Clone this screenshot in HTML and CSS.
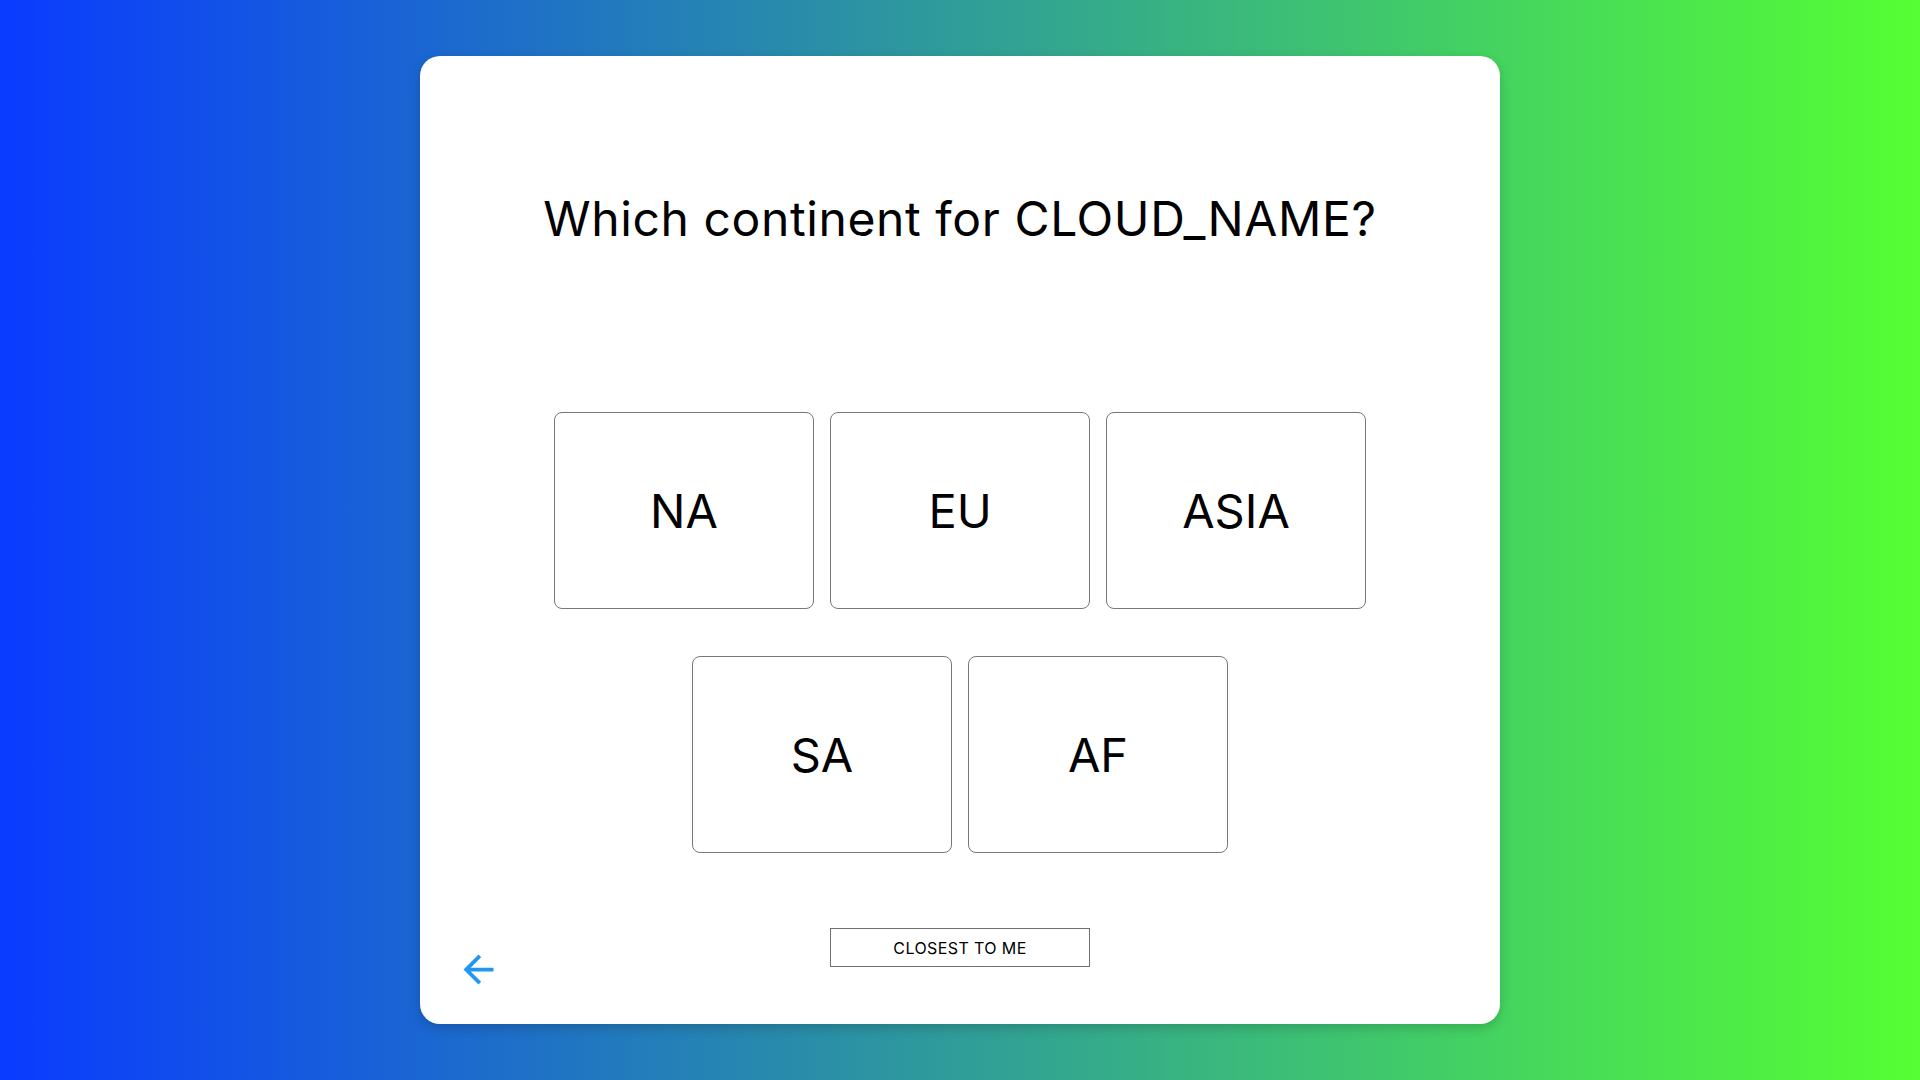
FILE: index.html
```html
<!DOCTYPE html>
<html lang="en">
<head>
<meta charset="utf-8">
<title>Which continent</title>
<link rel="stylesheet" href="styles.css">
</head>
<body>
<main class="card">
  <h1 class="title">Which continent for CLOUD_NAME?</h1>
  <div class="options">
    <button class="option">NA</button>
    <button class="option">EU</button>
    <button class="option">ASIA</button>
    <button class="option">SA</button>
    <button class="option">AF</button>
  </div>
  <div class="footer">
    <button class="back" aria-label="Back">
      <svg viewBox="0 0 24 24" width="45" height="45"><path d="M20 11H7.83l5.59-5.59L12 4l-8 8 8 8 1.41-1.41L7.83 13H20v-2z"/></svg>
    </button>
    <button class="closest">CLOSEST TO ME</button>
    <span></span>
  </div>
</main>
</body>
</html>
```
FILE: styles.css
```css
* { box-sizing: border-box; }
html, body { margin: 0; height: 100%; }
body {
  background: linear-gradient(90deg, #0a3bff 0%, #55ff33 100%);
  font-family: "Inter", "Open Sans", sans-serif;
  color: #000;
  display: flex;
  align-items: center;
  justify-content: center;
}
.card {
  width: 1080px;
  height: 968px;
  background: #fff;
  border-radius: 20px;
  box-shadow: 0 4px 12px rgba(0,0,0,0.18);
  display: flex;
  flex-direction: column;
  align-items: center;
  padding: 127px 36px 32px;
}
.title {
  margin: 0;
  font-size: 48px;
  line-height: 72px;
  font-weight: 400;
  letter-spacing: 0.6px;
}
.options {
  margin-top: 157px;
  width: 812px;
  display: flex;
  flex-wrap: wrap;
  justify-content: center;
  column-gap: 16px;
  row-gap: 47px;
}
.option {
  width: 260px;
  height: 197px;
  background: #fff;
  border: 1px solid #777;
  border-radius: 8px;
  font-family: inherit;
  font-size: 47px;
  color: #000;
  display: flex;
  align-items: center;
  justify-content: center;
  padding: 0;
}
.footer {
  margin-top: auto;
  width: 100%;
  display: grid;
  grid-template-columns: 1fr 260px 1fr;
  align-items: end;
}
.back {
  justify-self: start;
  background: none;
  border: 0;
  padding: 0;
  display: block;
  width: 45px;
  height: 45px;
}
.back svg { display: block; fill: #2196f3; }
.closest {
  height: 39px;
  margin-bottom: 25px;
  background: #fff;
  border: 1px solid #707070;
  font-family: inherit;
  font-size: 16px;
  letter-spacing: 0.4px;
  color: #000;
  padding: 0;
}
```
